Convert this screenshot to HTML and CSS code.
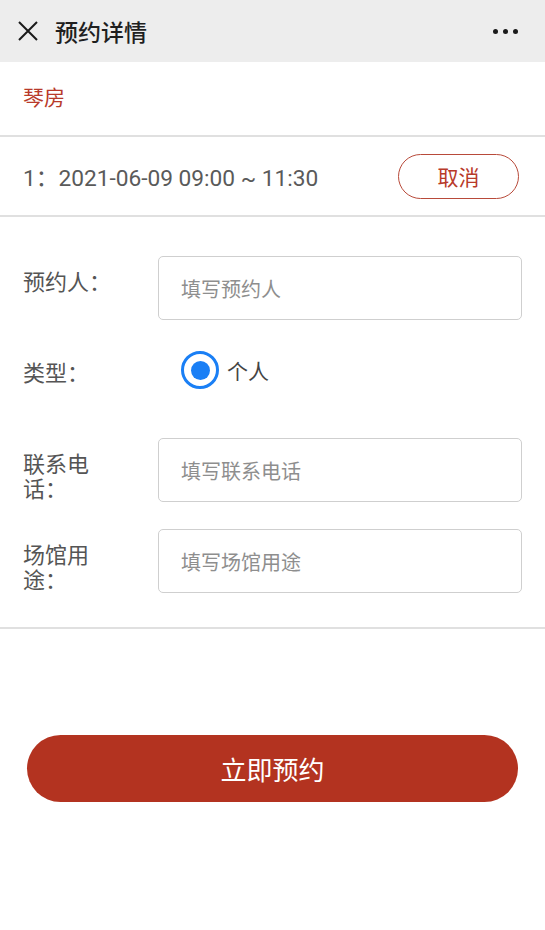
FILE: index.html
```html
<!DOCTYPE html>
<html lang="zh-CN">
<head>
  <meta charset="UTF-8">
  <meta name="viewport" content="width=device-width, initial-scale=1.0">
  <title>预约详情</title>
  <link rel="stylesheet" href="styles.css">
</head>
<body>

<!-- Top Bar -->
<div id="top-bar">
  <svg class="close-icon" width="22" height="22" viewBox="0 0 22 22">
    <path d="M2 2 L20 20 M20 2 L2 20" stroke="#1a1a1a" stroke-width="2" fill="none"/>
  </svg>
  <h1>预约详情</h1>
  <div class="more">
    <span></span><span></span><span></span>
  </div>
</div>

<!-- Room -->
<div class="room-name">琴房</div>

<!-- Time Slot -->
<div class="slot-row">
  <div class="slot-text">1：2021-06-09 09:00 ~ 11:30</div>
  <button class="cancel-button">取消</button>
</div>

<!-- Form -->
<div id="booking-form">
  <div class="form-row">
    <label class="form-label">预约人：</label>
    <input type="text" class="form-input" placeholder="填写预约人">
  </div>
  <div class="form-row">
    <label class="form-label">类型：</label>
    <div class="radio-option">
      <span class="radio checked"></span>
      <span>个人</span>
    </div>
  </div>
  <div class="form-row">
    <label class="form-label">联系电话：</label>
    <input type="text" class="form-input" placeholder="填写联系电话">
  </div>
  <div class="form-row last">
    <label class="form-label">场馆用途：</label>
    <input type="text" class="form-input" placeholder="填写场馆用途">
  </div>
</div>

<button id="submit-button">立即预约</button>

</body>
</html>
```

FILE: styles.css
```css
body {
  font-family: Roboto, "Noto Sans CJK SC", sans-serif;
  margin: 0;
  padding: 0;
  background-color: #fff;
  color: #555;
}

#top-bar {
  height: 62px;
  background-color: #ededed;
  display: flex;
  align-items: center;
  padding: 0 16px 0 17px;
}

.close-icon {
  flex-shrink: 0;
}

#top-bar h1 {
  margin: 0 0 0 16px;
  font-size: 23px;
  font-weight: 500;
  color: #1f1f1f;
  flex-grow: 1;
}

.more {
  display: flex;
  gap: 5px;
  margin-right: 11px;
}

.more span {
  width: 5px;
  height: 5px;
  border-radius: 50%;
  background-color: #1a1a1a;
}

.room-name {
  height: 73px;
  line-height: 73px;
  padding-left: 23px;
  font-size: 21px;
  color: #b83a2a;
  border-bottom: 2px solid #e0e0e0;
}

.slot-row {
  height: 78px;
  display: flex;
  align-items: center;
  justify-content: space-between;
  padding: 0 26px 0 23px;
  border-bottom: 2px solid #e0e0e0;
}

.slot-text {
  font-size: 22.7px;
  color: #5a5a5a;
}

.cancel-button {
  width: 121px;
  height: 45px;
  border: 1.5px solid #b84a3a;
  border-radius: 23px;
  background-color: #fff;
  color: #b83a2a;
  font-family: "Noto Sans CJK SC", sans-serif;
  font-size: 21px;
  padding: 0;
}

#booking-form {
  padding: 39px 23px 34px 23px;
  border-bottom: 2px solid #e0e0e0;
}

.form-row {
  display: flex;
  align-items: flex-start;
  height: 64px;
  margin-bottom: 27px;
}

.form-row.last {
  margin-bottom: 0;
}

.form-label {
  width: 92px;
  margin-right: 43px;
  padding-top: 14px;
  font-size: 22px;
  line-height: 25px;
  color: #555;
}

.form-input {
  flex-grow: 1;
  height: 64px;
  box-sizing: border-box;
  border: 1.5px solid #cfcfcf;
  border-radius: 5px;
  padding: 0 22px;
  font-family: "Noto Sans CJK SC", sans-serif;
  font-size: 20px;
  color: #333;
  outline: none;
}

.form-input::placeholder {
  color: #8e8e8e;
}

.radio-option {
  display: flex;
  align-items: center;
  gap: 8px;
  margin: 4px 0 0 23px;
  font-size: 21px;
  color: #444;
}

.radio {
  width: 38px;
  height: 38px;
  box-sizing: border-box;
  border: 3px solid #1a7ff5;
  border-radius: 50%;
  display: flex;
  align-items: center;
  justify-content: center;
}

.radio.checked::after {
  content: "";
  width: 19px;
  height: 19px;
  border-radius: 50%;
  background-color: #1a7ff5;
}

#submit-button {
  display: block;
  width: 491px;
  height: 67px;
  margin: 106px 0 0 27px;
  border: none;
  border-radius: 34px;
  background-color: #b33320;
  color: #fff;
  font-family: "Noto Sans CJK SC", sans-serif;
  font-size: 26px;
}
```
